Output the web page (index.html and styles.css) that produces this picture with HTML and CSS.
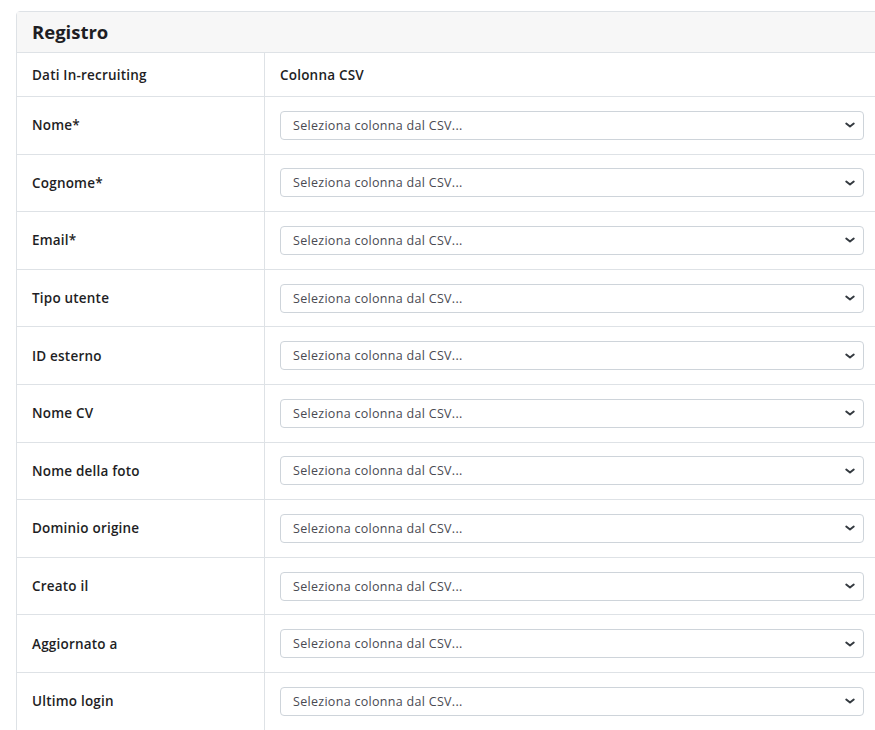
FILE: index.html
```html
<!DOCTYPE html>
<html lang="it">
<head>
  <meta charset="UTF-8" />
  <title>Registro</title>
  <link rel="stylesheet" href="styles.css">
</head>
<body>

  <div class="card">
    <div class="card-header">
      <h3>Registro</h3>
    </div>

    <div class="map-row head-row">
      <div class="cell label-cell">Dati In-recruiting</div>
      <div class="cell">Colonna CSV</div>
    </div>

    <div class="map-row">
      <div class="cell label-cell">Nome*</div>
      <div class="cell"><select class="csv-select"><option>Seleziona colonna dal CSV...</option></select></div>
    </div>
    <div class="map-row">
      <div class="cell label-cell">Cognome*</div>
      <div class="cell"><select class="csv-select"><option>Seleziona colonna dal CSV...</option></select></div>
    </div>
    <div class="map-row">
      <div class="cell label-cell">Email*</div>
      <div class="cell"><select class="csv-select"><option>Seleziona colonna dal CSV...</option></select></div>
    </div>
    <div class="map-row">
      <div class="cell label-cell">Tipo utente</div>
      <div class="cell"><select class="csv-select"><option>Seleziona colonna dal CSV...</option></select></div>
    </div>
    <div class="map-row">
      <div class="cell label-cell">ID esterno</div>
      <div class="cell"><select class="csv-select"><option>Seleziona colonna dal CSV...</option></select></div>
    </div>
    <div class="map-row">
      <div class="cell label-cell">Nome CV</div>
      <div class="cell"><select class="csv-select"><option>Seleziona colonna dal CSV...</option></select></div>
    </div>
    <div class="map-row">
      <div class="cell label-cell">Nome della foto</div>
      <div class="cell"><select class="csv-select"><option>Seleziona colonna dal CSV...</option></select></div>
    </div>
    <div class="map-row">
      <div class="cell label-cell">Dominio origine</div>
      <div class="cell"><select class="csv-select"><option>Seleziona colonna dal CSV...</option></select></div>
    </div>
    <div class="map-row">
      <div class="cell label-cell">Creato il</div>
      <div class="cell"><select class="csv-select"><option>Seleziona colonna dal CSV...</option></select></div>
    </div>
    <div class="map-row">
      <div class="cell label-cell">Aggiornato a</div>
      <div class="cell"><select class="csv-select"><option>Seleziona colonna dal CSV...</option></select></div>
    </div>
    <div class="map-row">
      <div class="cell label-cell">Ultimo login</div>
      <div class="cell"><select class="csv-select"><option>Seleziona colonna dal CSV...</option></select></div>
    </div>
  </div>

</body>
</html>
```

FILE: styles.css
```css
html {
  overflow: hidden;
}

body {
  font-family: "Open Sans", "Noto Sans", sans-serif;
  margin: 11px 0 0 16px;
  background-color: #fff;
  color: #212529;
}

.card {
  width: 880px;
  border: 1px solid #dee2e6;
  border-radius: 4px 0 0 0;
  background-color: #fff;
}

.card-header {
  background-color: #f7f7f7;
  border-bottom: 1px solid #dee2e6;
  height: 40px;
  box-sizing: border-box;
  display: flex;
  align-items: center;
  padding: 0 15px 1px;
  height: 41px;
}

.card-header h3 {
  margin: 0;
  font-size: 18.5px;
  font-weight: 700;
  color: #1e1e24;
}

.map-row {
  display: grid;
  grid-template-columns: 248px 1fr;
  height: 57.6px;
  border-bottom: 1px solid #dee2e6;
  box-sizing: border-box;
}

.head-row {
  height: 44px;
}

.cell {
  display: flex;
  align-items: center;
  padding: 0 15px;
  font-size: 13.5px;
  letter-spacing: 0.2px;
  font-weight: 600;
  color: #1e1e24;
}

.label-cell {
  border-right: 1px solid #dee2e6;
}

.csv-select {
  appearance: none;
  width: 584px;
  height: 29px;
  border: 1px solid #ced4da;
  border-radius: 4px;
  padding: 0 30px 0 12px;
  font-family: "Open Sans", "Noto Sans", sans-serif;
  font-size: 12.5px;
  letter-spacing: 0.3px;
  color: #4a4a52;
  background-color: #fff;
  background-image: url("data:image/svg+xml,%3Csvg xmlns='http://www.w3.org/2000/svg' viewBox='0 0 16 16'%3E%3Cpath fill='none' stroke='%23343a40' stroke-linecap='round' stroke-linejoin='round' stroke-width='2.6' d='M3 6l5 4 5-4'/%3E%3C/svg%3E");
  background-repeat: no-repeat;
  background-position: right 6px center;
  background-size: 14px 12px;
}
```
